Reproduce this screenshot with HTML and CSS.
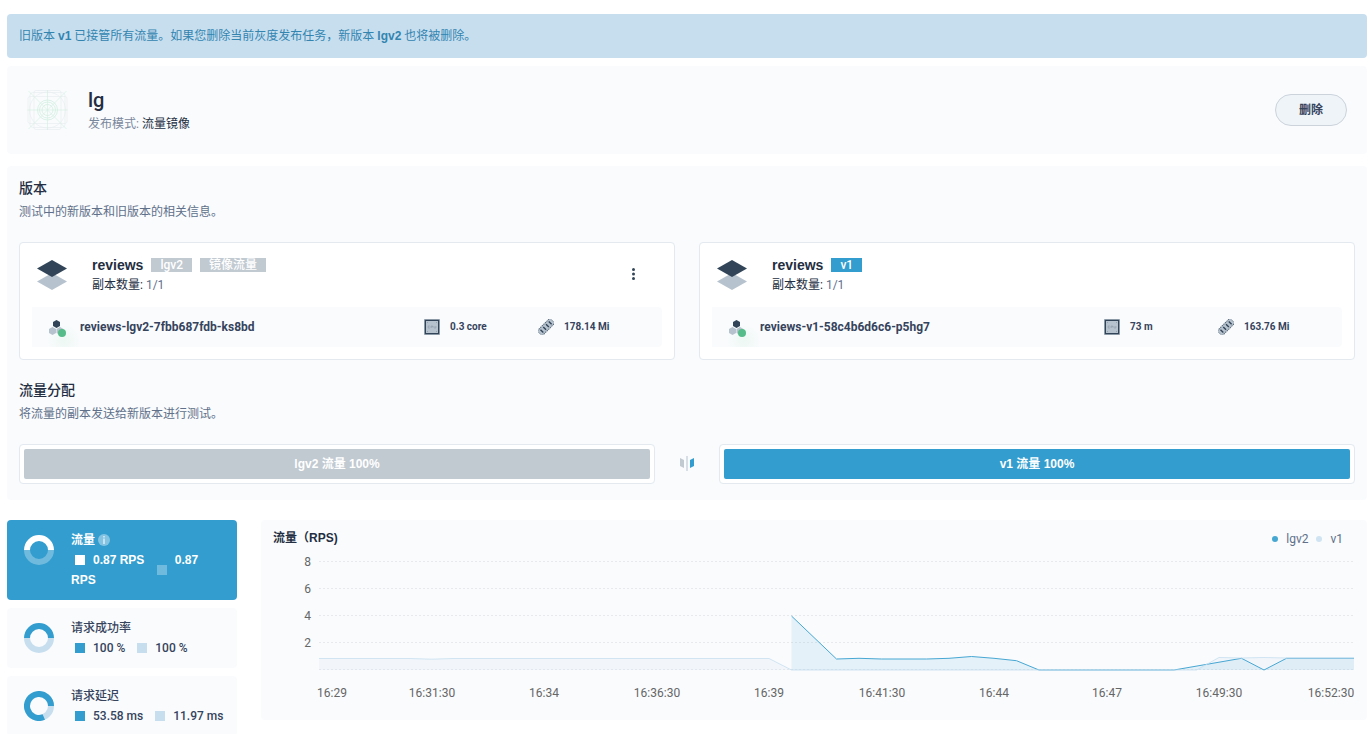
FILE: index.html
```html
<!DOCTYPE html>
<html lang="zh-CN">
<head>
<meta charset="utf-8">
<meta name="viewport" content="width=device-width, initial-scale=1">
<title>lg</title>
<link rel="stylesheet" href="styles.css">
</head>
<body>
<svg class="sprite" aria-hidden="true">
  <symbol id="layers" viewBox="0 0 40 40">
    <path d="M5 26.5 20 18l15 8.5L20 35z" fill="#b6c2cd"/>
    <path d="M5 13.5 20 5l15 8.5L20 22z" fill="#324558"/>
  </symbol>
  <symbol id="pod" viewBox="0 0 40 40">
    <path d="m20.500 13 3.500 2v4l-3.500 2-3.500-2v-4z" fill="#324558"/>
    <path d="m16.500 20 3.500 2v4l-3.500 2-3.500-2v-4z" fill="#b6c2cd"/>
    <path d="m24 20 3.500 2v4l-3.500 2-3.500-2v-4z" fill="#b6c2cd"/>
    <circle cx="26" cy="26" r="4" fill="#55bc8a"/>
  </symbol>
  <symbol id="cpu" viewBox="0 0 16 16">
    <rect x="0" y="0" width="16" height="16" rx="1" fill="#8b99a7"/>
    <rect x="1.500" y="1.500" width="13" height="13" fill="#b6c2cd" stroke="#324558"/>
    <path d="M5.800 7H4.200v2h1.600M7 9V7h1.700v1H7M10 7v2h1.800V7" fill="none" stroke="#8593a2" stroke-width=".5"/>
    <path d="M3 3h1v1H3zM12 3h1v1h-1zM3 12h1v1H3zM12 12h1v1h-1z" fill="#96a4b1"/>
  </symbol>
  <symbol id="memory" viewBox="0 0 16 16">
    <g transform="rotate(-45 8 8)">
      <rect x="-1" y="4.500" width="18" height="7" rx="1" fill="#b6c2cd"/>
      <path d="M-1 4.500h18M-1 11.500h18" stroke="#5b6b7b" stroke-width="1" stroke-dasharray="1.500 .7"/>
      <path d="M-1 6v4M17 6v4" stroke="#7b8a99" stroke-width=".8"/>
      <path d="M2.200 6v4M6.100 6v4M10 6v4M13.900 6v4" stroke="#324558" stroke-width="1.400"/>
    </g>
  </symbol>
</svg>
<main class="page">
  <div class="alert" role="status">旧版本 <strong>v1</strong> 已接管所有流量。如果您删除当前灰度发布任务，新版本 <strong>lgv2</strong> 也将被删除。</div>

  <header class="panel header">
    <svg class="header-icon" viewBox="0 0 40 40" fill="none" aria-hidden="true">
      <g stroke="#e8ecef" stroke-width=".6">
        <rect x=".5" y="6.500" width="39" height="27" rx="2"/>
        <rect x="6.500" y=".5" width="27" height="39" rx="2"/>
        <rect x="2.500" y="2.500" width="35" height="35" rx="3"/>
        <circle cx="20" cy="20" r="18"/>
      </g>
      <g stroke="#d3efe1" stroke-width=".8">
        <path d="M1 1l38 38M39 1 1 39M20 0v40M0 20h40" stroke-opacity=".8"/>
        <circle cx="20" cy="20" r="10"/><circle cx="20" cy="20" r="8"/><circle cx="20" cy="20" r="5.500"/>
      </g>
    </svg>
    <div class="header-text">
      <h1>lg</h1>
      <p>发布模式: <span>流量镜像</span></p>
    </div>
    <button class="delete" type="button">删除</button>
  </header>

  <section class="panel detail">
    <h2>版本</h2>
    <p class="desc">测试中的新版本和旧版本的相关信息。</p>
    <div class="versions">
      <article class="version">
        <div class="version-head">
          <svg class="icon-lg" aria-hidden="true"><use href="#layers"/></svg>
          <div class="version-text">
            <h3>reviews <span class="tag">lgv2</span><span class="tag">镜像流量</span></h3>
            <p>副本数量: <span>1/1</span></p>
          </div>
          <button class="more" type="button" aria-label="更多"><svg viewBox="0 0 16 16" fill="#324558"><circle cx="7.500" cy="2.500" r="1.500"/><circle cx="7.500" cy="7" r="1.500"/><circle cx="7.500" cy="11.500" r="1.500"/></svg></button>
        </div>
        <div class="pod">
          <svg class="icon-pod" aria-hidden="true"><use href="#pod"/></svg>
          <strong class="pod-name">reviews-lgv2-7fbb687fdb-ks8bd</strong>
          <span class="usage"><svg aria-hidden="true"><use href="#cpu"/></svg>0.3 core</span>
          <span class="usage"><svg aria-hidden="true"><use href="#memory"/></svg>178.14 Mi</span>
        </div>
      </article>
      <article class="version">
        <div class="version-head">
          <svg class="icon-lg" aria-hidden="true"><use href="#layers"/></svg>
          <div class="version-text">
            <h3>reviews <span class="tag tag-blue">v1</span></h3>
            <p>副本数量: <span>1/1</span></p>
          </div>
        </div>
        <div class="pod">
          <svg class="icon-pod" aria-hidden="true"><use href="#pod"/></svg>
          <strong class="pod-name">reviews-v1-58c4b6d6c6-p5hg7</strong>
          <span class="usage"><svg aria-hidden="true"><use href="#cpu"/></svg>73 m</span>
          <span class="usage"><svg aria-hidden="true"><use href="#memory"/></svg>163.76 Mi</span>
        </div>
      </article>
    </div>

    <h2>流量分配</h2>
    <p class="desc">将流量的副本发送给新版本进行测试。</p>
    <div class="traffic">
      <div class="bar"><div class="bar-fill">lgv2 流量 100%</div></div>
      <svg class="mirror" viewBox="0 0 16 16" aria-hidden="true">
        <path d="M1 2l4 2v8l-4-2z" fill="#c1c9d1"/><path d="M7 0h2v15H7z" fill="#d8dee5"/><path d="M15 2l-4 2v8l4-2z" fill="#329dce"/>
      </svg>
      <div class="bar"><div class="bar-fill bar-blue">v1 流量 100%</div></div>
    </div>
  </section>

  <section class="monitor">
    <div class="metrics">
      <button class="metric active" type="button">
        <svg class="donut" viewBox="0 0 30 30" fill="none" stroke-width="6" aria-hidden="true"><path d="M3 15a12 12 0 0 0 24 0" stroke="#70bade"/><path d="M3 15a12 12 0 0 1 24 0" stroke="#fff"/></svg>
        <span class="metric-text">
          <span class="metric-name">流量 <svg class="info" viewBox="0 0 12 12" aria-hidden="true"><circle cx="6" cy="6" r="6" fill="#84c4e2"/><path d="M5.200 2h1.600v1.500H5.200zM5.200 4.500h1.600V10H5.200z" fill="#d7ecf6"/></svg></span>
          <span class="values"><span class="value">0.87 RPS</span> <span class="value value-old">0.87 RPS</span></span>
        </span>
      </button>
      <button class="metric" type="button">
        <svg class="donut" viewBox="0 0 30 30" fill="none" stroke-width="6" aria-hidden="true"><path d="M3 15a12 12 0 0 0 24 0" stroke="#c7deef"/><path d="M3 15a12 12 0 0 1 24 0" stroke="#329dce"/></svg>
        <span class="metric-text">
          <span class="metric-name">请求成功率</span>
          <span class="values"><span class="value">100 %</span> <span class="value value-old">100 %</span></span>
        </span>
      </button>
      <button class="metric" type="button">
        <svg class="donut" viewBox="0 0 30 30" fill="none" stroke-width="6" aria-hidden="true"><circle cx="15" cy="15" r="12" stroke="#c7deef"/><path d="M27 15A12 12 0 1 0 19.800 26" stroke="#329dce"/></svg>
        <span class="metric-text">
          <span class="metric-name">请求延迟</span>
          <span class="values"><span class="value">53.58 ms</span> <span class="value value-old">11.97 ms</span></span>
        </span>
      </button>
    </div>

    <div class="panel chart">
      <div class="chart-head">
        <h4>流量（RPS)</h4>
        <ul class="legend"><li>lgv2</li><li class="legend-old">v1</li></ul>
      </div>
      <svg class="plot" viewBox="0 0 1082 160" role="img" aria-label="流量（RPS)">
        <g class="grid"><path d="M46 13.500H1081M46 40.500H1081M46 67.500H1081M46 94.500H1081M46 121.500H1081"/></g>
        <path class="area-old" d="M46 110.500H136L158.500 111.200 181 110.500H496L518.500 122H46zM923.500 122 946 109.500 968.500 110 991 109.500 1013.500 110H1081V122z"/>
        <path class="area-new" d="M518.500 68 563.500 111 586 110.300 608.500 111H653.500L676 110.300 698.500 108.500 721 110.300 743.500 112.700 766 122H518.500zM901 122 968.500 110.300 991 122 1013.500 110.300H1081V122z"/>
        <path class="line-new" d="M518.500 68 563.500 111 586 110.300 608.500 111H653.500L676 110.300 698.500 108.500 721 110.300 743.500 112.700 766 122H901L968.500 110.300 991 122 1013.500 110.300H1081"/>
        <path class="line-old" d="M46 110.500H136L158.500 111.200 181 110.500H496L518.500 122H923.500L946 109.500 968.500 110 991 109.500 1013.500 110H1081"/>
        <g class="y-labels"><text x="38" y="18">8</text><text x="38" y="45">6</text><text x="38" y="72">4</text><text x="38" y="99">2</text></g>
        <g class="x-labels"><text x="59" y="149">16:29</text><text x="159" y="149">16:31:30</text><text x="271" y="149">16:34</text><text x="384" y="149">16:36:30</text><text x="496" y="149">16:39</text><text x="609" y="149">16:41:30</text><text x="721" y="149">16:44</text><text x="834" y="149">16:47</text><text x="946" y="149">16:49:30</text><text x="1058" y="149">16:52:30</text></g>
      </svg>
    </div>
  </section>
</main>
</body>
</html>
```
FILE: styles.css
```css
* { box-sizing: border-box; }
html { scrollbar-width: none; }
body {
  margin: 0;
  background: #fff;
  color: #242e42;
  font: 12px/20px Roboto, "Noto Sans CJK SC", sans-serif;
}
h1, h2, h3, h4, p, ul { margin: 0; padding: 0; }
button { font: inherit; color: inherit; border: 0; cursor: pointer; }
.sprite { display: none; }
.page { padding: 14px 2px 0 7px; }
.panel { background: #f9fbfd; border-radius: 4px; }

.alert strong, .version h3, .bar-fill, .active, .chart h4 {
  font-family: "Liberation Sans", "Noto Sans CJK SC", sans-serif;
  font-weight: 700;
}

.alert {
  padding: 12px;
  border-radius: 4px;
  background: #c7deef;
  color: #3385b0;
}

.header { display: flex; align-items: center; gap: 20px; margin-top: 8px; padding: 20px; }
.header-icon { width: 41px; height: 40px; }
.header-text { flex: 1; }
.header h1 { font-size: 20px; line-height: 28px; font-weight: 500; }
.header p { color: #79879c; }
.header p span { color: #242e42; }
.delete {
  width: 72px;
  height: 32px;
  border: 1px solid #ccd3db;
  border-radius: 16px;
  background: #eff4f9;
  color: #36435c;
  font-weight: 700;
}

.detail { margin-top: 12px; padding: 12px 12px 16px; }
.detail h2 { font-size: 14px; line-height: 20px; font-weight: 500; }
.desc { margin: 4px 0 20px; color: #5f708a; }

.versions { display: grid; grid-template-columns: 1fr 1fr; gap: 24px; margin-bottom: 20px; }
.version { padding: 12px; border: 1px solid #e3e9ef; border-radius: 4px; background: #fff; }
.version-head { display: flex; align-items: center; gap: 20px; margin-bottom: 12px; }
.icon-lg { width: 40px; height: 40px; }
.version-text { flex: 1; }
.version h3 { display: flex; align-items: center; gap: 8px; font-size: 14px; line-height: 20px; }
.version-text p span { color: #5f708a; }
.tag {
  padding: 0 9px;
  background: #c1c9d1;
  color: #fff;
  font: 500 12px/14px Roboto, "Noto Sans CJK SC", sans-serif;
}
.tag-blue { background: #329dce; }
.more { display: flex; margin-right: 20px; padding: 0; background: none; }
.more svg { width: 16px; height: 16px; }

.pod { display: flex; align-items: center; border-radius: 4px; background: #f9fbfd; }
.icon-pod {
  width: 48px;
  height: 40px;
  padding: 0 4px;
  background: radial-gradient(circle at 32px 34px, #edf8f3, #f9fbfd 16px);
}
.pod-name { flex: 1; color: #36435c; font-weight: 700; }
.usage { display: flex; align-items: center; gap: 10px; width: 114px; color: #36435c; font-size: 10px; font-weight: 700; }
.usage:last-child { width: 124px; }
.usage svg { width: 16px; height: 16px; }

.traffic { display: flex; align-items: center; gap: 24px; }
.bar { flex: 1; padding: 4px; border: 1px solid #e3e9ef; border-radius: 4px; background: #fff; }
.bar-fill { border-radius: 2px; background: #c1c9d1; color: #fff; line-height: 30px; text-align: center; }
.bar-blue { background: #329dce; }
.mirror { width: 16px; height: 16px; }

.monitor { display: flex; align-items: flex-start; gap: 24px; margin-top: 20px; }
.metrics { display: flex; flex-direction: column; gap: 8px; width: 230px; }
.metric {
  display: flex;
  gap: 17px;
  padding: 10px 12px 10px 17px;
  border-radius: 4px;
  background: #f9fbfd;
  color: #36435c;
  font-weight: 500;
  text-align: left;
}
.donut { flex: none; width: 30px; height: 30px; margin-top: 5px; }
.metric-text { flex: 1; }
.metric-name, .values { display: block; }
.info { width: 12px; height: 12px; vertical-align: -2px; }
.value { position: relative; margin-right: 5px; padding-left: 22px; }
.value:last-child { margin-right: 0; }
.value::before {
  content: "";
  position: absolute;
  top: 50%;
  left: 4px;
  width: 10px;
  height: 10px;
  margin-top: -5px;
  background: #329dce;
}
.value-old::before { background: #c7deef; }
.metric.active { background: #329dce; color: #fff; font-weight: 700; }
.active .value::before { background: #fff; }
.active .value-old::before { background: #70bade; }

.chart { flex: 1; min-width: 0; padding: 8px 12px 12px; }
.chart-head { display: flex; justify-content: space-between; }
.chart h4 { font-size: 12px; line-height: 20px; }
.legend { display: flex; gap: 8px; padding: 2px 12px 0 0; list-style: none; color: #5f708a; line-height: 18px; }
.legend li { display: flex; align-items: center; gap: 8px; }
.legend li::before { content: ""; width: 6px; height: 6px; border-radius: 50%; background: #47a7d3; }
.legend .legend-old::before { background: #cfe3f2; }
.plot { display: block; width: 100%; height: auto; }
.grid path { stroke: #e7e9ed; stroke-dasharray: 2 2; }
.area-new { fill: #329dce; fill-opacity: .1; }
.area-old { fill: #c7deef; fill-opacity: .15; }
.line-new, .line-old { fill: none; stroke: #47a7d3; }
.line-old { stroke: #c7deef; stroke-opacity: .8; }
.plot text { fill: #666; font-size: 12px; }
.x-labels { text-anchor: middle; }
.y-labels { text-anchor: end; }
```
